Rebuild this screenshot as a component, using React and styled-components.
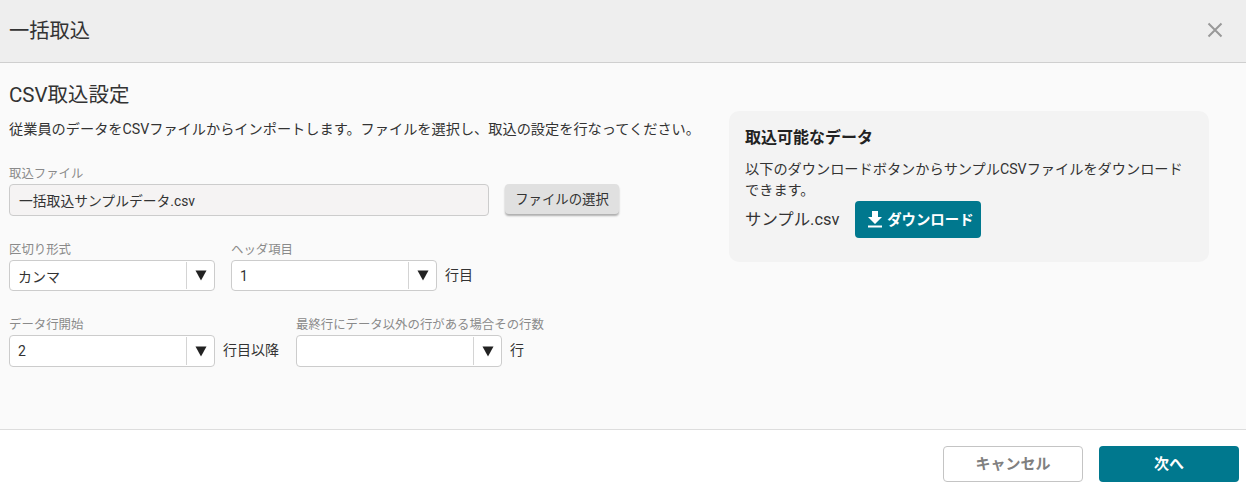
import React from "react";
import styled, { createGlobalStyle } from "styled-components";

const GlobalStyle = createGlobalStyle`
  html, body {
    margin: 0;
    padding: 0;
    background: #fff;
  }
  body {
    font-family: Roboto, "Noto Sans CJK JP", sans-serif;
    color: #333;
  }
`;

const Dialog = styled.div`
  width: 1246px;
  height: 490px;
  display: flex;
  flex-direction: column;
`;

const Header = styled.header`
  height: 62px;
  box-sizing: content-box;
  flex: none;
  display: flex;
  align-items: center;
  justify-content: space-between;
  padding: 0 23px 0 9px;
  background: #eeeeee;
  border-bottom: 1px solid #cfcfcf;
`;

const Title = styled.h1`
  margin: 0 0 4px;
  font-size: 20.3px;
  font-weight: 400;
  color: #333;
`;

const CloseIcon = styled.svg`
  width: 16px;
  height: 16px;
  display: block;
  margin-bottom: 2px;
`;

const Body = styled.main`
  flex: 1;
  display: flex;
  padding: 20px 37px 0 9px;
  background: #fafafa;
`;

const Settings = styled.section`
  width: 720px;
  flex: none;
`;

const Heading = styled.h2`
  margin: 0;
  font-size: 20.5px;
  line-height: 24px;
  font-weight: 400;
  color: #333;
`;

const Lead = styled.p`
  margin: 12px 0 0;
  font-size: 14.2px;
  line-height: 20px;
  color: #333;
`;

const Row = styled.div`
  display: flex;
  align-items: flex-end;
  margin-top: ${(p) => p.$top}px;
`;

const Field = styled.div`
  margin-right: ${(p) => p.$gap || 0}px;
`;

const Label = styled.span`
  display: block;
  font-size: 12.4px;
  line-height: 16px;
  margin-bottom: 2px;
  color: #8a8a8a;
  white-space: nowrap;
`;

const Control = styled.div`
  display: flex;
  align-items: center;
`;

const FileBox = styled.div`
  width: 480px;
  height: 32px;
  box-sizing: border-box;
  display: flex;
  align-items: center;
  padding-left: 9px;
  font-size: 13.8px;
  background: #f5f3f3;
  border: 1px solid #cccccc;
  border-radius: 4px;
`;

const FileButton = styled.button`
  width: 114px;
  height: 30px;
  margin: 0 0 2px 16px;
  padding: 0 0 2px;
  font: inherit;
  font-size: 13.4px;
  color: #333;
  background: #e0e0e0;
  border: 0;
  border-radius: 4px;
  box-shadow: 0 2px 2px rgba(0, 0, 0, 0.3);
`;

const Select = styled.div`
  width: 206px;
  height: ${(p) => p.$height}px;
  box-sizing: border-box;
  display: flex;
  background: #fff;
  border: 1px solid #cccccc;
  border-radius: 4px;
`;

const SelectValue = styled.span`
  flex: 1;
  display: flex;
  align-items: center;
  padding-left: 8px;
  font-size: 14px;
  color: #333;
  border-right: 1px solid #d4d4d4;
  margin: 1px 0;
`;

const SelectArrow = styled.span`
  width: 27px;
  flex: none;
  display: flex;
  align-items: center;
  justify-content: center;
`;

const Suffix = styled.span`
  font-size: 14px;
  margin-left: 8px;
  margin-right: ${(p) => p.$gap || 0}px;
  margin-bottom: 4px;
  white-space: nowrap;
  color: #333;
`;

const SampleCard = styled.aside`
  width: 480px;
  height: 151px;
  box-sizing: border-box;
  margin-top: 28px;
  padding: 16px 16px;
  background: #f3f3f3;
  border-radius: 10px;
`;

const CardTitle = styled.h3`
  margin: 0;
  font-size: 16px;
  line-height: 21px;
  font-weight: 700;
  color: #222;
`;

const CardText = styled.p`
  margin: 11px 0 0;
  font-size: 14.2px;
  line-height: 21px;
  color: #333;
`;

const SampleRow = styled.div`
  display: flex;
  align-items: center;
`;

const SampleName = styled.span`
  font-size: 16.4px;
  margin-right: 16px;
  margin-bottom: 3px;
  color: #333;
`;

const DownloadButton = styled.button`
  width: 126px;
  height: 37px;
  padding: 0 0 2px 4px;
  display: flex;
  align-items: center;
  justify-content: center;
  gap: 4px;
  font: inherit;
  font-size: 14.4px;
  font-weight: 700;
  color: #fff;
  background: #00788e;
  border: 0;
  border-radius: 4px;
`;

const DownloadIcon = styled.svg`
  width: 16px;
  height: 18px;
  display: block;
`;

const Footer = styled.footer`
  flex: none;
  height: 61px;
  box-sizing: border-box;
  display: flex;
  justify-content: flex-end;
  gap: 16px;
  padding: 16px 7px 0 0;
  background: #fff;
  border-top: 1px solid #dddddd;
`;

const FooterButton = styled.button`
  width: 140px;
  height: 36px;
  padding: 0 0 3px;
  font: inherit;
  font-size: 15px;
  font-weight: 700;
  border-radius: 4px;
  color: ${(p) => (p.$primary ? "#fff" : "#808080")};
  background: ${(p) => (p.$primary ? "#00788e" : "#fff")};
  border: ${(p) => (p.$primary ? "0" : "1px solid #c4c4c4")};
`;

const Arrow = () => (
  <svg width="12" height="11" viewBox="0 0 12 11">
    <path d="M0.5 0.5h11L6 10.5z" fill="#222" />
  </svg>
);

const Dropdown = ({ value, height }) => (
  <Select $height={height}>
    <SelectValue>{value}</SelectValue>
    <SelectArrow>
      <Arrow />
    </SelectArrow>
  </Select>
);

const App = () => {
  return (
    <Dialog>
      <GlobalStyle />
      <Header>
        <Title>一括取込</Title>
        <CloseIcon viewBox="0 0 16 16">
          <path d="M1.5 1.5l13 13M14.5 1.5l-13 13" stroke="#999" strokeWidth="2" fill="none" />
        </CloseIcon>
      </Header>
      <Body>
        <Settings>
          <Heading>CSV取込設定</Heading>
          <Lead>従業員のデータをCSVファイルからインポートします。ファイルを選択し、取込の設定を行なってください。</Lead>
          <Row $top={27}>
            <Field>
              <Label>取込ファイル</Label>
              <FileBox>一括取込サンプルデータ.csv</FileBox>
            </Field>
            <FileButton>ファイルの選択</FileButton>
          </Row>
          <Row $top={26}>
            <Field $gap={16}>
              <Label>区切り形式</Label>
              <Dropdown value="カンマ" height={31} />
            </Field>
            <Field>
              <Label>ヘッダ項目</Label>
              <Control>
                <Dropdown value="1" height={31} />
                <Suffix>行目</Suffix>
              </Control>
            </Field>
          </Row>
          <Row $top={26}>
            <Field>
              <Label>データ行開始</Label>
              <Control>
                <Dropdown value="2" height={32} />
                <Suffix $gap={17}>行目以降</Suffix>
              </Control>
            </Field>
            <Field>
              <Label>最終行にデータ以外の行がある場合その行数</Label>
              <Control>
                <Dropdown value="" height={32} />
                <Suffix>行</Suffix>
              </Control>
            </Field>
          </Row>
        </Settings>
        <SampleCard>
          <CardTitle>取込可能なデータ</CardTitle>
          <CardText>以下のダウンロードボタンからサンプルCSVファイルをダウンロードできます。</CardText>
          <SampleRow>
            <SampleName>サンプル.csv</SampleName>
            <DownloadButton>
              <DownloadIcon viewBox="0 0 16 18">
                <path d="M5 1h6v6h4l-7 7-7-7h4z" fill="#fff" />
                <rect x="1" y="15.5" width="14" height="2" fill="#fff" />
              </DownloadIcon>
              ダウンロード
            </DownloadButton>
          </SampleRow>
        </SampleCard>
      </Body>
      <Footer>
        <FooterButton>キャンセル</FooterButton>
        <FooterButton $primary>次へ</FooterButton>
      </Footer>
    </Dialog>
  );
};

export default App;
